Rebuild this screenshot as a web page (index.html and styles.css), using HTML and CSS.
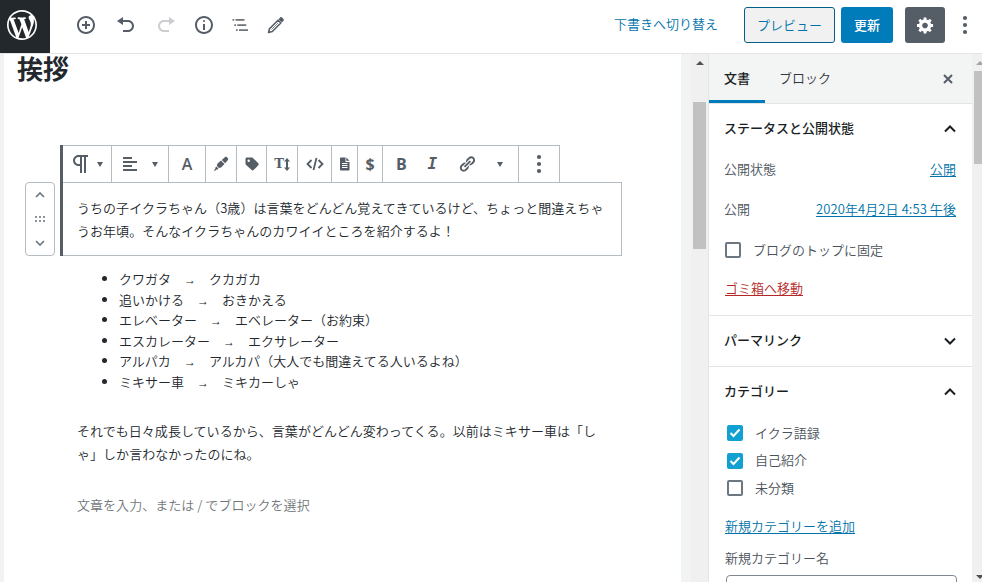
FILE: index.html
```
<!DOCTYPE html>
<html lang="ja">
<head>
    <meta charset="UTF-8">
    <meta name="viewport" content="width=device-width, initial-scale=1.0">
    <title>投稿の編集</title>
    <link rel="stylesheet" href="styles.css">
</head>
<body>
    <header class="header">
        <a class="logo" href="#">
            <svg width="30" height="30" viewBox="0 0 20 20"><path d="M20 10c0-5.51-4.49-10-10-10C4.48 0 0 4.49 0 10c0 5.52 4.48 10 10 10 5.51 0 10-4.48 10-10zM7.78 15.37L4.37 6.22c.55-.02 1.17-.08 1.17-.08.5-.06.44-1.13-.06-1.11 0 0-1.45.11-2.37.11-.18 0-.37 0-.58-.01C4.12 2.69 6.87 1.11 10 1.11c2.33 0 4.45.87 6.05 2.34-.68-.11-1.65.39-1.65 1.58 0 .74.45 1.36.9 2.1.35.61.55 1.36.55 2.46 0 1.49-1.4 5-1.4 5l-3.03-8.37c.54-.02.82-.17.82-.17.5-.05.44-1.25-.06-1.22 0 0-1.44.12-2.38.12-.87 0-2.33-.12-2.33-.12-.5-.03-.56 1.2-.06 1.22l.92.08 1.26 3.41zM17.41 10c.24-.64.74-1.87.43-4.25.7 1.29 1.05 2.71 1.05 4.25 0 3.29-1.73 6.24-4.4 7.78.97-2.59 1.94-5.2 2.92-7.78zM6.1 18.09C3.12 16.65 1.11 13.53 1.11 10c0-1.3.23-2.48.72-3.59C3.25 10.3 4.67 14.2 6.1 18.09zm4.03-6.63l2.58 6.98c-.86.29-1.76.45-2.71.45-.79 0-1.57-.11-2.29-.33.81-2.38 1.62-4.74 2.42-7.1z"/></svg>
        </a>
        <div class="tools">
            <button class="tool"><svg width="20" height="20" viewBox="0 0 20 20"><path d="M10 1c-5 0-9 4-9 9s4 9 9 9 9-4 9-9-4-9-9-9zm0 16c-3.9 0-7-3.1-7-7s3.1-7 7-7 7 3.1 7 7-3.1 7-7 7zm1-11H9v3H6v2h3v3h2v-3h3V9h-3V6z"/></svg></button>
            <button class="tool"><svg width="20" height="20" viewBox="0 0 20 20"><path d="M12 5H7V2L1 6l6 4V7h5c2.2 0 4 1.8 4 4s-1.8 4-4 4H7v2h5c3.3 0 6-2.7 6-6s-2.7-6-6-6z"/></svg></button>
            <button class="tool disabled"><svg width="20" height="20" viewBox="0 0 20 20"><path d="M8 5h5V2l6 4-6 4V7H8c-2.2 0-4 1.8-4 4s1.8 4 4 4h5v2H8c-3.3 0-6-2.7-6-6s2.7-6 6-6z"/></svg></button>
            <button class="tool small"><svg width="20" height="20" viewBox="0 0 20 20"><path d="M9 15h2V9H9v6zm1-10c-.5 0-1 .5-1 1s.5 1 1 1 1-.5 1-1-.5-1-1-1zm0-4c-5 0-9 4-9 9s4 9 9 9 9-4 9-9-4-9-9-9zm0 16c-3.9 0-7-3.1-7-7s3.1-7 7-7 7 3.1 7 7-3.1 7-7 7z"/></svg></button>
            <button class="tool small outline"><svg width="20" height="20" viewBox="0 0 20 20"><path d="M5.500 4h9v1.700h-9zM7.300 9.200h9v1.700h-9zM9 14.300h9V16H9zM2.500 4h1.700v1.700H2.500zM4.300 9.200H6v1.700H4.300zM6 14.300h1.700V16H6z"/></svg></button>
            <button class="tool small"><svg width="20" height="20" viewBox="0 0 20 20"><path class="pencil" d="M12 5.200L3.500 13.700l-1 3.800 3.800-1L14.800 8z"/><path class="thin" d="M12 8l-6.500 6.500"/><path d="M12.500 4.200l1.700-1.700c.6-.6 1.200-.6 1.800 0l1.500 1.500c.6.6.6 1.200 0 1.800l-1.700 1.700z"/></svg></button>
        </div>
        <div class="actions">
            <a class="draft" href="#">下書きへ切り替え</a>
            <button class="btn preview">プレビュー</button>
            <button class="btn update">更新</button>
            <button class="btn gear"><svg width="20" height="20" viewBox="0 0 20 20"><path d="M18 12h-2.18c-.17.7-.44 1.35-.81 1.93l1.54 1.54-2.1 2.1-1.54-1.54c-.58.36-1.23.63-1.91.79V19H8v-2.18c-.68-.16-1.33-.43-1.91-.79l-1.54 1.54-2.12-2.12 1.54-1.54c-.36-.58-.63-1.23-.79-1.91H1V9.03h2.17c.16-.7.44-1.35.8-1.94L2.43 5.55l2.1-2.1 1.54 1.54c.58-.37 1.24-.64 1.93-.81V2h3v2.18c.68.16 1.33.43 1.91.79l1.54-1.54 2.12 2.12-1.54 1.54c.36.59.64 1.24.8 1.94H18V12zm-8.500 1.500c1.660 0 3-1.340 3-3s-1.340-3-3-3-3 1.340-3 3 1.340 3 3 3z"/></svg></button>
            <button class="more"><svg width="6" height="20" viewBox="0 0 6 20"><circle cx="3" cy="3" r="2.1"/><circle cx="3" cy="10" r="2.1"/><circle cx="3" cy="17" r="2.1"/></svg></button>
        </div>
    </header>

    <div class="layout">
        <main class="editor">
            <h1 class="post-title">挨拶</h1>

            <div class="selected">
                <div class="mover">
                    <svg width="10" height="6" viewBox="0 0 10 6"><path class="line" d="M1 5l4-4 4 4"/></svg>
                    <svg width="10" height="6" viewBox="0 0 10 6"><path d="M0 0h2v2H0zM4 0h2v2H4zM8 0h2v2H8zM0 4h2v2H0zM4 4h2v2H4zM8 4h2v2H8z"/></svg>
                    <svg width="10" height="6" viewBox="0 0 10 6"><path class="line" d="M1 1l4 4 4-4"/></svg>
                </div>
                <div class="block">
                    <div class="toolbar">
                        <div class="group type">
                            <svg width="24" height="24" viewBox="0 0 24 24"><path d="M11 5v7H9.500C7.600 12 6 10.400 6 8.500S7.600 5 9.500 5H11m8-2H9.500C6.500 3 4 5.500 4 8.500S6.500 14 9.500 14H11v7h2V5h2v16h2V5h2V3z"/></svg>
                            <span class="caret"></span>
                        </div>
                        <div class="group align">
                            <svg width="20" height="20" viewBox="0 0 20 20"><path d="M12 5V3H3v2h9zm5 4V7H3v2h14zm-5 4v-2H3v2h9zm5 4v-2H3v2h14z"/></svg>
                            <span class="caret"></span>
                        </div>
                        <div class="group w37"><span class="glyph">A</span></div>
                        <div class="group w31"><svg width="16" height="16" viewBox="0 0 16 16"><path d="M8.800 3.900l3.300-2.800c.6-.5 1.200-.5 1.700 0l1.100 1.100c.5.5.5 1.100 0 1.700l-2.800 3.300zM8 4.600L11.500 8l-3.200 3.300c-.4.400-.8.500-1.300.5l-1.100.1-1.900-1.900.1-1.100c0-.5.100-.9.500-1.300zM3.400 10.600l2 2-1 1-1.100.1-.8.900H.6l1.700-1.900.1-1.100z"/></svg></div>
                        <div class="group w30"><svg width="14" height="14" viewBox="0 0 14 14"><path fill-rule="evenodd" d="M.5 1.900C.5 1.100 1.100.5 1.900.5h5c.4 0 .7.100 1 .4l5.400 5.400c.5.500.5 1.300 0 1.900l-4.700 4.900c-.5.500-1.300.5-1.900 0L.9 7.800c-.3-.3-.4-.6-.4-1zM3.700 2.500a1.200 1.200 0 1 0 0 2.400 1.200 1.200 0 0 0 0-2.400z"/></svg></div>
                        <div class="group w31"><span class="glyph slab">T</span><svg width="6" height="13" viewBox="0 0 6 13"><path d="M3 0l3 3.500H4v6h2L3 13 0 9.500h2v-6H0z"/></svg></div>
                        <div class="group w34"><svg width="18" height="14" viewBox="0 0 18 14"><path class="code" d="M5.500 3L1.500 7l4 4M12.500 3l4 4-4 4M10.500 1l-3 12"/></svg></div>
                        <div class="group w26"><svg width="10" height="14" viewBox="0 0 10 14"><path fill-rule="evenodd" d="M1 .5h4.500V5h4v7.500c0 .6-.4 1-1 1H1c-.6 0-1-.4-1-1v-11c0-.6.4-1 1-1zM6.300.5l3.200 3.300H6.300zM2 6v1h5.500V6zM2 8v1h5.500V8zM2 10v1h5.500v-1z"/></svg></div>
                        <div class="group w25"><span class="glyph dollar">$</span></div>
                        <div class="group format">
                            <span class="glyph bold">B</span>
                            <span class="glyph italic">I</span>
                            <svg width="18" height="18" viewBox="0 0 20 20"><path d="M17.740 2.760c1.680 1.690 1.680 4.410 0 6.100l-1.530 1.520c-1.120 1.120-2.700 1.470-4.140 1.090l2.620-2.610.76-.77.76-.76c.84-.84.84-2.200 0-3.040-.84-.85-2.200-.85-3.040 0l-.77.76-3.380 3.380c-.37-1.440-.02-3.020 1.100-4.140l1.520-1.530c1.690-1.680 4.420-1.680 6.100 0zM8.590 13.430l5.340-5.340c.42-.42.42-1.100 0-1.520-.44-.43-1.130-.39-1.530 0l-5.330 5.340c-.42.42-.42 1.100 0 1.520.44.43 1.130.39 1.520 0zm-.76 2.290l4.140-4.150c.38 1.440.03 3.020-1.090 4.140l-1.520 1.530c-1.690 1.680-4.410 1.680-6.100 0-1.680-1.680-1.680-4.420 0-6.100l1.530-1.520c1.120-1.120 2.700-1.470 4.140-1.100l-4.140 4.150c-.85.84-.85 2.200 0 3.050.84.84 2.200.84 3.040 0z"/></svg>
                            <span class="caret"></span>
                        </div>
                        <div class="group w41"><svg width="6" height="20" viewBox="0 0 6 20"><circle cx="3" cy="3" r="2.100"/><circle cx="3" cy="10" r="2.100"/><circle cx="3" cy="17" r="2.100"/></svg></div>
                    </div>
                    <p class="block-text">うちの子イクラちゃん（3歳）は言葉をどんどん覚えてきているけど、ちょっと間違えちゃ<br>うお年頃。そんなイクラちゃんのカワイイところを紹介するよ！</p>
                </div>
            </div>

            <ul class="list">
                <li>クワガタ　<span class="to">→</span>　クカガカ</li>
                <li>追いかける　<span class="to">→</span>　おきかえる</li>
                <li>エレベーター　<span class="to">→</span>　エベレーター（お約束）</li>
                <li>エスカレーター　<span class="to">→</span>　エクサレーター</li>
                <li>アルパカ　<span class="to">→</span>　アルカパ（大人でも間違えてる人いるよね）</li>
                <li>ミキサー車　<span class="to">→</span>　ミキカーしゃ</li>
            </ul>

            <p class="para">それでも日々成長しているから、言葉がどんどん変わってくる。以前はミキサー車は「し<br>ゃ」しか言わなかったのにね。</p>
            <p class="para placeholder">文章を入力、または / でブロックを選択</p>
        </main>

        <div class="scroll main-scroll">
            <span class="arrow"></span>
            <span class="thumb"></span>
        </div>

        <aside class="sidebar">
            <div class="tabs">
                <button class="tab active">文書</button>
                <button class="tab">ブロック</button>
                <button class="close"><svg width="10" height="10" viewBox="0 0 10 10"><path d="M1 1l8 8M9 1L1 9"/></svg></button>
            </div>

            <section class="panel status">
                <h2 class="panel-title">ステータスと公開状態 <svg class="chevron" width="12" height="8" viewBox="0 0 12 8"><path d="M1 6.500l5-5 5 5"/></svg></h2>
                <div class="row"><span>公開状態</span><a href="#">公開</a></div>
                <div class="row"><span>公開</span><a class="date" href="#">2020年4月2日 4:53 午後</a></div>
                <label class="check sticky"><span class="box"></span><span>ブログのトップに固定</span></label>
                <a class="trash" href="#">ゴミ箱へ移動</a>
            </section>

            <section class="panel">
                <h2 class="panel-title">パーマリンク <svg class="chevron" width="12" height="8" viewBox="0 0 12 8"><path d="M1 1.500l5 5 5-5"/></svg></h2>
            </section>

            <section class="panel category">
                <h2 class="panel-title">カテゴリー <svg class="chevron" width="12" height="8" viewBox="0 0 12 8"><path d="M1 6.500l5-5 5 5"/></svg></h2>
                <div class="checks">
                    <label class="check"><span class="box on"><svg width="12" height="10" viewBox="0 0 12 10"><path d="M1.500 5l3 3 6-6.500"/></svg></span><span>イクラ語録</span></label>
                    <label class="check"><span class="box on"><svg width="12" height="10" viewBox="0 0 12 10"><path d="M1.500 5l3 3 6-6.500"/></svg></span><span>自己紹介</span></label>
                    <label class="check"><span class="box"></span><span>未分類</span></label>
                </div>
                <a class="add" href="#">新規カテゴリーを追加</a>
                <label class="name-label" for="catName">新規カテゴリー名</label>
                <input class="name" type="text" id="catName">
            </section>
        </aside>

        <div class="scroll side-scroll">
            <span class="arrow"></span>
            <span class="thumb"></span>
            <span class="arrow down"></span>
        </div>
    </div>
</body>
</html>
```
FILE: styles.css
```
* {
    box-sizing: border-box;
}

body {
    margin: 0;
    height: 582px;
    overflow: hidden;
    font-family: "Noto Sans CJK JP", sans-serif;
    font-size: 13px;
    font-weight: 350;
    color: #23282d;
    background: #fff;
}

button {
    font: inherit;
    padding: 0;
    border: none;
    background: none;
    display: flex;
    align-items: center;
    justify-content: center;
}

svg {
    display: block;
    flex: none;
    fill: #555d66;
}

a {
    color: #0073aa;
    text-underline-offset: 2px;
}

/* Header */
.header {
    display: flex;
    height: 54px;
    border-bottom: 1px solid #e2e4e7;
}

.logo {
    width: 50px;
    height: 53px;
    padding: 10px 0 0 7px;
    background: #23282d;
}

.logo svg {
    fill: #fff;
}

.tools {
    display: flex;
    height: 50px;
    padding-left: 16px;
}

.tool {
    width: 40px;
}

.tool.small {
    width: 36px;
}

.tool.outline svg {
    fill: #6c737b;
}

.tool.disabled {
    opacity: .3;
}

.pencil {
    fill: none;
    stroke: #555d66;
    stroke-width: 1.6;
    stroke-linejoin: round;
}

.thin {
    stroke: #555d66;
    stroke-width: .7;
}

.actions {
    display: flex;
    align-items: center;
    height: 50px;
    margin-left: auto;
    padding-right: 14px;
}

.draft {
    margin-right: 26px;
    padding-bottom: 3px;
    text-decoration: none;
}

.btn {
    height: 36px;
    padding-bottom: 2px;
    border-radius: 3px;
}

.preview {
    width: 91px;
    margin-right: 6px;
    color: #0073aa;
    background: #f1f1f1;
    border: 1px solid #016087;
}

.update {
    width: 52px;
    margin-right: 12px;
    color: #fff;
    font-weight: 500;
    background: #007cba;
}

.gear {
    width: 40px;
    margin-right: 17px;
    padding: 0;
    background: #555d66;
}

.gear svg {
    width: 19px;
    fill: #fff;
}

.layout {
    display: flex;
    height: 528px;
}

/* Editor */
.editor {
    width: 691px;
    border-left: 4px solid #f1f3f3;
    border-right: 10px solid #f1f3f5;
    overflow: hidden;
}

.post-title {
    margin: 0 0 0 13px;
    font-size: 26px;
    line-height: 28px;
    font-weight: 700;
}

.selected {
    display: flex;
    align-items: flex-end;
    gap: 5px;
    margin: 63px 0 0 21px;
}

.mover {
    display: flex;
    flex-direction: column;
    align-items: center;
    justify-content: space-between;
    width: 30px;
    height: 74px;
    padding: 9px 0;
    border: 1px solid #b5bcc2;
    border-radius: 4px;
}

.mover svg {
    fill: #8a929a;
}

.mover .line {
    fill: none;
    stroke: #6c7781;
    stroke-width: 1.7;
}

.block {
    width: 562px;
    border-left: 3px solid #555d66;
}

.toolbar {
    display: flex;
    width: 497px;
    height: 37px;
    border-top: 1px solid #b5bcc2;
}

.group {
    display: flex;
    align-items: center;
    justify-content: center;
    border-right: 1px solid #b5bcc2;
}

.type {
    width: 49px;
    gap: 4px;
    padding-right: 3px;
}

.align {
    width: 57px;
    gap: 12px;
    padding-right: 2px;
}

.w25 { width: 25px; }
.w26 { width: 26px; }
.w30 { width: 30px; }
.w31 { width: 31px; }
.w34 { width: 34px; }
.w37 { width: 37px; }
.w41 { width: 41px; }

.caret {
    border: 3px solid transparent;
    border-top: 5px solid #555d66;
    border-bottom: 0;
}

.glyph {
    font-family: "Open Sans", sans-serif;
    font-size: 16px;
    line-height: 20px;
    font-weight: 600;
    color: #555d66;
}

.slab {
    font-family: "DejaVu Serif", serif;
    font-weight: 700;
    font-size: 13px;
}

.dollar,
.bold {
    font-weight: 700;
}

.italic {
    font-family: "DejaVu Sans Mono", monospace;
    font-style: italic;
    font-weight: 700;
}

.code {
    fill: none;
    stroke: #555d66;
    stroke-width: 1.8;
}

.format {
    width: 136px;
    justify-content: space-between;
    padding: 0 15px 0 13px;
}

.block-text {
    margin: 0;
    height: 74px;
    padding: 13px 0 0 14px;
    line-height: 23px;
    letter-spacing: .04px;
    border: 1px solid #b5bcc2;
    border-left: 0;
    white-space: nowrap;
}

.list {
    margin: 13px 0 0 115px;
    padding: 0;
    line-height: 20.5px;
}

/* narrower arrow than the CJK one */
.to {
    font-family: "Liberation Sans", sans-serif;
    font-size: 12px;
    line-height: 1;
}

.para {
    margin: 27px 0 0 73px;
    line-height: 23px;
    letter-spacing: .04px;
}

.placeholder {
    margin-top: 28px;
    color: #72777c;
}

/* Scrollbars */
.scroll {
    display: flex;
    flex-direction: column;
    background: #f0f0f0;
}

.main-scroll {
    width: 17px;
    align-items: center;
}

.main-scroll .thumb {
    width: 13px;
    height: 147px;
    margin-top: 37px;
}

.side-scroll {
    width: 10px;
    align-items: flex-end;
    overflow: hidden;
}

.side-scroll .thumb {
    width: 8px;
    height: 93px;
    margin-top: 6px;
}

.thumb {
    background: #c1c1c1;
}

.arrow {
    margin-top: 7px;
    border: 4px solid transparent;
    border-top: 0;
    border-bottom: 4px solid #505050;
}

.side-scroll .arrow {
    margin-right: -2px;
    border-bottom-color: #a3a3a3;
}

.side-scroll .down {
    margin-top: auto;
    margin-bottom: 3px;
    border-top: 4px solid #505050;
    border-bottom: 0;
}

/* Sidebar */
.sidebar {
    width: 264px;
    border-left: 1px solid #e2e4e7;
    color: #4a525a;
    overflow: hidden;
}

.tabs {
    display: flex;
    height: 50px;
    background: #f3f4f4;
    border-bottom: 1px solid #e2e4e7;
}

.tab {
    height: 49px;
    padding: 0 14px 3px;
    color: #32373c;
}

.tab.active {
    width: 56px;
    padding: 1px 0 0;
    color: #191e23;
    font-weight: 500;
    border-bottom: 3px solid #007cba;
}

.close {
    margin-left: auto;
    margin-right: 19px;
}

.close path {
    stroke: #555d66;
    stroke-width: 2;
}

.panel {
    padding: 0 16px 0 15px;
    border-bottom: 1px solid #e2e4e7;
}

.panel-title {
    display: flex;
    align-items: center;
    justify-content: space-between;
    height: 50px;
    margin: 0;
    padding-bottom: 3px;
    font-size: 13px;
    font-weight: 500;
    color: #191e23;
}

.chevron {
    margin-top: 3px;
}

.chevron path {
    fill: none;
    stroke: #191e23;
    stroke-width: 2;
}

.status {
    height: 212px;
}

.row {
    display: flex;
    justify-content: space-between;
    height: 20px;
    line-height: 19px;
    margin: 5px 0 20px;
}

.date {
    letter-spacing: .08px;
}

.check {
    display: flex;
    align-items: center;
    gap: 12px;
    height: 20px;
    padding-left: 1px;
}

.check > span:last-child {
    padding-bottom: 2px;
}

.sticky {
    margin-top: 21px;
}

.box {
    display: flex;
    align-items: center;
    justify-content: center;
    width: 16px;
    height: 16px;
    border: 2px solid #6c7781;
    border-radius: 2px;
}

.box.on {
    background: #11a0d2;
    border-color: #11a0d2;
}

.box path {
    fill: none;
    stroke: #fff;
    stroke-width: 2;
}

.trash {
    display: block;
    margin: 18px 0 0 1px;
    line-height: 20px;
    color: #b52727;
}

.checks {
    display: flex;
    flex-direction: column;
    gap: 7.5px;
    padding: 6px 0 0 2px;
}

.add,
.name-label {
    display: block;
    margin-left: 1px;
    line-height: 20px;
}

.add {
    margin-top: 18px;
}

.name-label {
    margin-top: 12px;
}

.name {
    display: block;
    width: 231px;
    height: 30px;
    margin: 7px 0 0 2px;
    border: 1px solid #7e8993;
    border-radius: 4px;
}
```
